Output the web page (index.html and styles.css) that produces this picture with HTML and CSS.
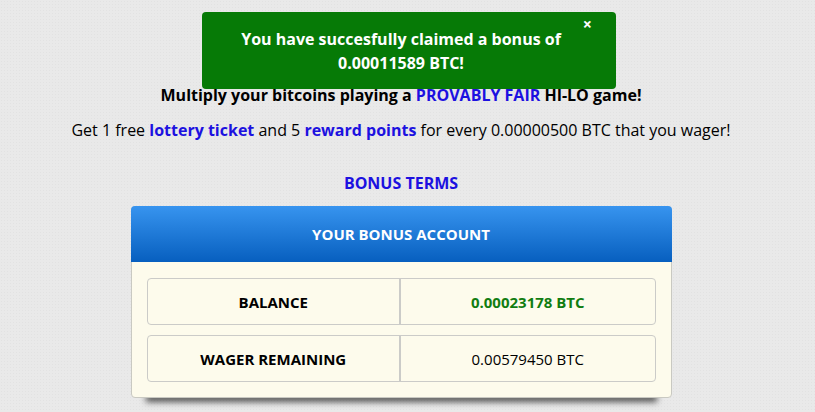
FILE: index.html
```html
<!DOCTYPE html>
<html lang="en">
<head>
  <meta charset="UTF-8">
  <title>Multiply BTC</title>
  <link rel="stylesheet" href="styles.css">
</head>
<body>

  <div class="page">
    <!-- claimed bonus notice -->
    <div class="notice">
      <span class="notice-close">&times;</span>
      You have succesfully claimed a bonus of<br>0.00011589 BTC!
    </div>

    <p class="intro">Multiply your bitcoins playing a <a href="#">PROVABLY FAIR</a> HI-LO game!</p>
    <p class="promo">Get 1 free <a href="#">lottery ticket</a> and 5 <a href="#">reward points</a> for every 0.00000500 BTC that you wager!</p>

    <p class="terms"><a href="#">BONUS TERMS</a></p>

    <div class="bonus-box">
      <div class="bonus-head">YOUR BONUS ACCOUNT</div>
      <div class="bonus-body">
        <div class="bonus-row">
          <div class="cell cell-label">BALANCE</div>
          <div class="cell cell-value balance">0.00023178 BTC</div>
        </div>
        <div class="bonus-row">
          <div class="cell cell-label">WAGER REMAINING</div>
          <div class="cell cell-value">0.00579450 BTC</div>
        </div>
      </div>
    </div>
  </div>

</body>
</html>
```

FILE: styles.css
```css
body {
  font-family: "Open Sans", Arial, sans-serif;
  margin: 0;
  padding: 0;
  background-color: #e9e9e9;
  background-image: radial-gradient(#e2e2e2 1px, transparent 1px);
  background-size: 3px 3px;
  color: #000;
  overflow: hidden;
  height: 412px;
}

a {
  color: #1c11e0;
  text-decoration: none;
  font-weight: bold;
}

.page {
  position: relative;
  width: 802px;
  padding-top: 84px;
  text-align: center;
}

.notice {
  position: absolute;
  top: 12px;
  left: 202px;
  width: 414px;
  height: 77px;
  box-sizing: border-box;
  padding: 15px 16px 0 0;
  background-color: #067a06;
  border-radius: 4px;
  color: #fff;
  font-weight: bold;
  font-size: 16px;
  line-height: 24px;
  z-index: 2;
}

.notice-close {
  position: absolute;
  top: 3px;
  right: 24px;
  font-size: 16px;
  line-height: 18px;
}

.intro {
  margin: 0;
  font-size: 16px;
  font-weight: bold;
  line-height: 22px;
}

.promo {
  margin: 13px 0 0;
  font-size: 16px;
  line-height: 22px;
}

.terms {
  margin: 31px 0 0;
  font-size: 16px;
  line-height: 22px;
}

.bonus-box {
  position: relative;
  width: 541px;
  margin: 12px auto 0;
  border-radius: 4px;
  border: 1px solid #c9c9c2;
  background-color: #fdfbec;
  box-sizing: border-box;
}

.bonus-box::after {
  content: "";
  position: absolute;
  left: 14px;
  right: 14px;
  bottom: 4px;
  height: 8px;
  box-shadow: 0 9px 6px rgba(0, 0, 0, 0.65);
  z-index: -1;
}

.bonus-head {
  height: 56px;
  margin: -1px -1px 0;
  line-height: 56px;
  border-radius: 4px 4px 0 0;
  background: linear-gradient(#3794ef, #075fbf);
  color: #fff;
  font-weight: bold;
  font-size: 15px;
}

.bonus-body {
  padding: 16px 15px 15px;
  display: grid;
  gap: 10px;
}

.bonus-row {
  display: grid;
  grid-template-columns: 1fr 1fr;
  height: 47px;
  border: 1px solid #cbcbc8;
  border-radius: 4px;
  box-sizing: border-box;
}

.cell {
  display: flex;
  align-items: center;
  justify-content: center;
  font-size: 15px;
}

.cell-label {
  font-weight: bold;
  border-right: 2px solid #cbcbc8;
}

.balance {
  color: #117d11;
  font-weight: bold;
}
```
